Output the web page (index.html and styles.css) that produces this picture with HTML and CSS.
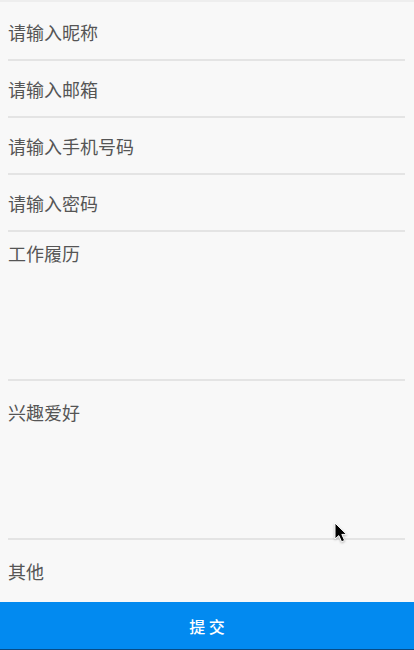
FILE: index.html
```html
<!DOCTYPE html>
<html lang="zh-CN">
<head>
<meta charset="utf-8">
<meta name="viewport" content="width=device-width, initial-scale=1">
<title>提交</title>
<link rel="stylesheet" href="styles.css">
</head>
<body>
<form class="form">
  <div class="fields">
    <input class="field" type="text" placeholder="请输入昵称" aria-label="请输入昵称">
    <input class="field" type="email" placeholder="请输入邮箱" aria-label="请输入邮箱">
    <input class="field" type="tel" placeholder="请输入手机号码" aria-label="请输入手机号码">
    <input class="field" type="password" placeholder="请输入密码" aria-label="请输入密码">
    <textarea class="field area" placeholder="工作履历" aria-label="工作履历"></textarea>
    <textarea class="field area" placeholder="兴趣爱好" aria-label="兴趣爱好"></textarea>
    <textarea class="field area last" placeholder="其他" aria-label="其他"></textarea>
  </div>
  <button class="submit" type="submit">提 交</button>
</form>
<svg class="pointer" viewBox="0 0 16 24" aria-hidden="true">
  <path d="M2 2V18L5.800 14.600L8.600 20.800L11.600 19.400L8.800 13.400H13.600Z" fill="#000" stroke="#fff" stroke-width="1" stroke-linejoin="round"/>
</svg>
</body>
</html>
```
FILE: styles.css
```css
* {
  box-sizing: border-box;
}

body {
  position: relative;
  margin: 0;
  background: #f8f8f8;
  font-family: "Noto Sans CJK SC", sans-serif;
}

.form {
  display: flex;
  flex-direction: column;
  min-height: 100vh;
  border-top: 2px solid #eee;
}

.fields {
  flex: 1;
  padding: 2px 9px 0 8px;
}

.field {
  display: block;
  width: 100%;
  height: 57px;
  margin: 0;
  padding: 0;
  border: 0;
  border-bottom: 2px solid #e4e4e4;
  border-radius: 0;
  outline: 0;
  background: transparent;
  color: #555;
  font: inherit;
  font-size: 18px;
  line-height: 28px;
}

.field::placeholder {
  color: #555;
  opacity: 1;
}

.area {
  height: 149px;
  padding: 7px 0 0;
  resize: none;
}

.area + .area {
  margin-top: 10px;
}

.last {
  height: 52px;
  border-bottom: 0;
  overflow: hidden;
}

.submit {
  height: 48px;
  padding: 0;
  border: 0;
  border-bottom: 1px solid #064b86;
  background: #028af0;
  color: #fff;
  font: inherit;
  font-size: 16px;
  font-weight: 500;
}

.pointer {
  position: absolute;
  top: 521px;
  left: 333px;
  width: 16px;
  height: 24px;
  filter: drop-shadow(0 1px 1px #0004);
  pointer-events: none;
}
```
